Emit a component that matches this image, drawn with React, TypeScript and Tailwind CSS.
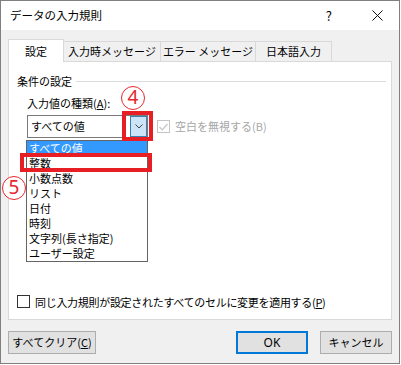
import { useState } from "react";

const font = "font-['Noto_Sans_CJK_JP','Noto_Sans',sans-serif]";

const items = ["すべての値", "整数", "小数点数", "リスト", "日付", "時刻", "文字列(長さ指定)", "ユーザー設定"];

const Circled = ({ n, className }: { n: string; className: string }) => (
  <div
    className={`absolute flex h-[24px] w-[24px] items-center justify-center rounded-full border-[1.5px] border-[#e8262d] font-['Noto_Sans',sans-serif] text-[19px] leading-none text-[#e8262d] ${className}`}
  >
    <span className="-mt-px">{n}</span>
  </div>
);

export default function App() {
  const [selected] = useState(0);

  return (
    <div className={`flex h-[364px] w-[400px] flex-col border border-[#7f7f7f] bg-[#f0f0f0] text-[11px] text-black ${font}`}>
      {/* title bar */}
      <div className="flex h-[29px] items-center bg-white pl-[9px]">
        <span className="text-[11.5px]">データの入力規則</span>
        <span className="ml-auto mr-[40px] text-[13px]">?</span>
        <svg width="11" height="11" viewBox="0 0 11 11" className="mr-[16px]">
          <path d="M0.5 0.5L10.5 10.5M10.5 0.5L0.5 10.5" stroke="#111" strokeWidth="1" />
        </svg>
      </div>

      <div className="flex flex-1 flex-col px-[7px] pt-[9px]">
        {/* tabs */}
        <div className="flex h-[22px] items-end">
          <div className="relative z-10 -mb-px flex h-[23px] w-[56px] items-center justify-center border border-b-0 border-[#d9d9d9] bg-white">
            設定
          </div>
          <div className="flex h-[20px] w-[97px] items-center justify-center border-t border-r border-[#d9d9d9]">
            入力時メッセージ
          </div>
          <div className="flex h-[20px] w-[95px] items-center justify-center border-t border-r border-[#d9d9d9]">
            エラー メッセージ
          </div>
          <div className="flex h-[20px] w-[76px] items-center justify-center border-t border-r border-[#d9d9d9]">
            日本語入力
          </div>
        </div>

        {/* panel */}
        <div className="relative flex h-[259px] w-[384px] flex-col border border-[#d9d9d9] bg-white pl-[8px]">
          <div className="mt-[12px] flex h-[14px] items-center">
            <span className="leading-[14px]">条件の設定</span>
            <div className="ml-[4px] mr-[5px] h-px flex-1 bg-[#dcdcdc]" />
          </div>

          <div className="mt-[8px] pl-[10px] leading-[14px]">
            入力値の種類(<span className="underline">A</span>):
          </div>

          <div className="mt-[5px] flex items-center pl-[10px]">
            <div className="flex h-[23px] w-[121px] items-center border border-[#7a7a7a] bg-white">
              <span className="pl-[3px]">すべての値</span>
              <div className="ml-auto flex h-[21px] w-[17px] items-center justify-center border border-[#3c7fb1] bg-[#cce4f7]">
                <svg width="8" height="5" viewBox="0 0 8 5">
                  <path d="M0.5 0.5L4 4L7.5 0.5" fill="none" stroke="#444" strokeWidth="1" />
                </svg>
              </div>
            </div>
            <div className="ml-[9px] flex h-[13px] w-[13px] items-center justify-center border border-[#c4c4c4]">
              <svg width="9" height="8" viewBox="0 0 9 8">
                <path d="M0.5 4L3.3 6.8L8.5 1" fill="none" stroke="#c4c4c4" strokeWidth="1.2" />
              </svg>
            </div>
            <span className="ml-[5px] text-[#a6a6a6]">空白を無視する(B)</span>
          </div>

          <div className="mt-auto mb-[9px] flex items-center">
            <div className="h-[13px] w-[13px] border border-[#333] bg-white" />
            <span className="ml-[5px] tracking-[-0.3px]">
              同じ入力規則が設定されたすべてのセルに変更を適用する(<span className="underline">P</span>)
            </span>
          </div>

          {/* open dropdown list */}
          <div className="absolute left-[17px] top-[78px] z-20 flex h-[122px] w-[122px] flex-col border border-[#646464] bg-white">
            {items.map((t, i) => (
              <div
                key={t}
                className={`flex h-[15px] items-center pl-[2px] leading-[15px] ${
                  i === selected ? "bg-[#3399ff] text-white" : ""
                }`}
              >
                {t}
              </div>
            ))}
          </div>

          {/* annotations */}
          <div className="absolute left-[113px] top-[49px] z-30 h-[30px] w-[31px] border-[4px] border-[#e81e25]" />
          <div className="absolute left-[11px] top-[91px] z-30 h-[19px] w-[132px] border-[4px] border-[#e81e25]" />
          <Circled n="4" className="left-[112px] top-[24px] z-30" />
          <Circled n="5" className="left-[-7px] top-[114px] z-30 bg-white" />
        </div>

        {/* buttons */}
        <div className="mt-[11px] flex items-center">
          <button className="h-[23px] w-[88px] border border-[#adadad] bg-[#e1e1e1]">
            すべてクリア(<span className="underline">C</span>)
          </button>
          <button className="ml-auto h-[23px] w-[72px] border-2 border-[#0078d7] bg-[#e1e1e1] font-['Noto_Sans',sans-serif] text-[12px]">
            OK
          </button>
          <button className="ml-[12px] h-[23px] w-[72px] border border-[#adadad] bg-[#e1e1e1]">キャンセル</button>
        </div>
      </div>
    </div>
  );
}
